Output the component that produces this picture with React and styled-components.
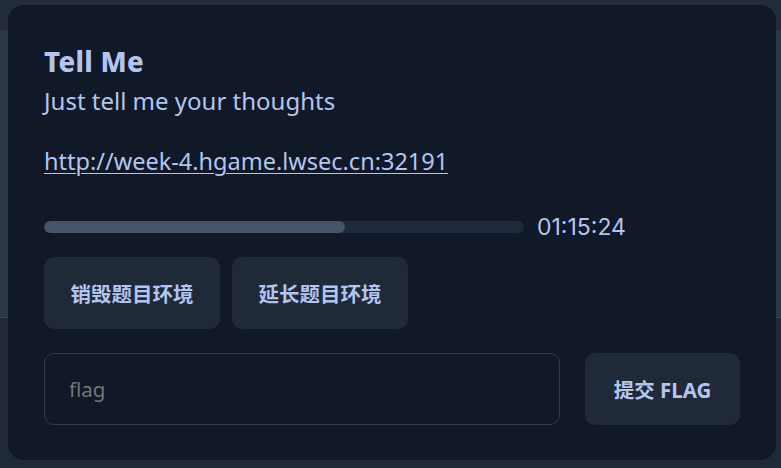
import styled, { createGlobalStyle } from "styled-components";

const GlobalStyle = createGlobalStyle`
    html, body {
        margin: 0;
        padding: 0;
        width: 781px;
        height: 468px;
        overflow: hidden;
        background: #1f2939;
        font-family: "Noto Sans", "Noto Sans CJK SC", sans-serif;
    }
`

const Page = styled.div`
    position: relative;
    width: 781px;
    height: 468px;
    display: flex;
    flex-direction: column;
`

const TopBar = styled.div`
    height: 30px;
    background: #222c3b;
`

const PageBody = styled.div`
    flex: 1;
    display: flex;
    flex-direction: column;
`

const SidePanel = styled.div`
    width: 100%;
    height: 287px;
    background: #2c3746;
    border-bottom: 1px solid #3a4553;
`

const Modal = styled.div`
    position: absolute;
    left: 8px;
    top: 5px;
    width: 768px;
    height: 455px;
    box-sizing: border-box;
    padding: 39px 36px 36px;
    background: #111827;
    border-radius: 16px;
    color: #b3c5ef;
    display: flex;
    flex-direction: column;
`

const Title = styled.h3`
    margin: 0;
    font-size: 27.5px;
    line-height: 36px;
    font-weight: 800;
    letter-spacing: 0.3px;
`

const Desc = styled.p`
    margin: 5px 0 0;
    font-size: 24px;
    line-height: 32px;
`

const Link = styled.a`
    margin-top: 28px;
    font-size: 23.5px;
    line-height: 32px;
    color: #b3c5ef;
    text-decoration: underline;
    text-decoration-thickness: 1px;
    text-underline-offset: 3px;
    align-self: flex-start;
`

const TimerRow = styled.div`
    margin-top: 35px;
    display: flex;
    align-items: center;
    gap: 13px;
`

const Track = styled.div`
    width: 480px;
    height: 12px;
    border-radius: 6px;
    background: #1e293b;
    overflow: hidden;
`

const Fill = styled.div`
    height: 100%;
    border-radius: 6px;
    background: #475569;
`

const Timer = styled.span`
    font-family: Inter, "Noto Sans", sans-serif;
    font-size: 23px;
    line-height: 30px;
`

const Actions = styled.div`
    margin-top: 15px;
    display: flex;
    gap: 12px;
`

const Button = styled.button`
    height: 72px;
    width: ${props => props.width}px;
    padding: 0;
    border: none;
    border-radius: 10px;
    background: #1f2937;
    color: #b3c5ef;
    font-family: "Noto Sans", "Noto Sans CJK SC", sans-serif;
    font-size: 20.5px;
    font-weight: 700;
    cursor: pointer;
`

const SubmitRow = styled.div`
    margin-top: 24px;
    display: flex;
    gap: 25px;
`

const FlagInput = styled.input`
    width: 516px;
    height: 72px;
    box-sizing: border-box;
    padding: 0 24px;
    border: 1px solid #333d4d;
    border-radius: 10px;
    background: #111827;
    color: #b3c5ef;
    font-family: "Noto Sans", sans-serif;
    font-size: 20.5px;
    outline: none;

    ::placeholder {
        color: #858e9d;
    }
`

export default function App()
{
    const progress = 62.8

    return (
        <>
        <GlobalStyle />
        <Page>
            <TopBar />
            <PageBody>
                <SidePanel />
            </PageBody>
            <Modal>
                <Title>Tell Me</Title>
                <Desc>Just tell me your thoughts</Desc>
                <Link href="#">http://week-4.hgame.lwsec.cn:32191</Link>
                <TimerRow>
                    <Track>
                        <Fill style={{ width: `${progress}%` }} />
                    </Track>
                    <Timer>01:15:24</Timer>
                </TimerRow>
                <Actions>
                    <Button width="176">销毁题目环境</Button>
                    <Button width="176">延长题目环境</Button>
                </Actions>
                <SubmitRow>
                    <FlagInput placeholder="flag" />
                    <Button width="155">提交 FLAG</Button>
                </SubmitRow>
            </Modal>
        </Page>
        </>
    )
}
